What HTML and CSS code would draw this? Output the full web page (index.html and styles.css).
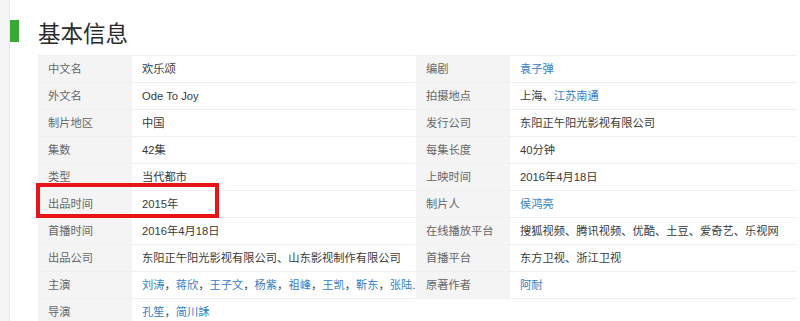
FILE: index.html
```html
<!DOCTYPE html>
<html lang="zh-CN">
<head>
<meta charset="utf-8">
<title>基本信息</title>
<link rel="stylesheet" href="styles.css">
</head>
<body>
<div class="page">
  <div class="strip"></div>
  <main class="content">
    <header class="head">
      <span class="bar"></span>
      <h2 class="title">基本信息</h2>
    </header>
    <div class="info">
      <dl class="block left">
        <div class="row"><dt>中文名</dt><dd>欢乐颂</dd></div>
        <div class="row"><dt>外文名</dt><dd>Ode To Joy</dd></div>
        <div class="row"><dt>制片地区</dt><dd>中国</dd></div>
        <div class="row"><dt>集数</dt><dd>42集</dd></div>
        <div class="row"><dt>类型</dt><dd>当代都市</dd></div>
        <div class="row marked"><dt>出品时间</dt><dd>2015年</dd><span class="mark"></span></div>
        <div class="row"><dt>首播时间</dt><dd>2016年4月18日</dd></div>
        <div class="row"><dt>出品公司</dt><dd>东阳正午阳光影视有限公司、山东影视制作有限公司</dd></div>
        <div class="row"><dt>主演</dt><dd><a>刘涛</a>，<a>蒋欣</a>，<a>王子文</a>，<a>杨紫</a>，<a>祖峰</a>，<a>王凯</a>，<a>靳东</a>，<a>张陆</a>.</dd></div>
        <div class="row"><dt>导演</dt><dd><a>孔笙</a>，<a>简川訸</a></dd></div>
      </dl>
      <dl class="block right">
        <div class="row"><dt>编剧</dt><dd><a>袁子弹</a></dd></div>
        <div class="row"><dt>拍摄地点</dt><dd>上海、<a>江苏南通</a></dd></div>
        <div class="row"><dt>发行公司</dt><dd>东阳正午阳光影视有限公司</dd></div>
        <div class="row"><dt>每集长度</dt><dd>40分钟</dd></div>
        <div class="row"><dt>上映时间</dt><dd>2016年4月18日</dd></div>
        <div class="row"><dt>制片人</dt><dd><a>侯鸿亮</a></dd></div>
        <div class="row"><dt>在线播放平台</dt><dd>搜狐视频、腾讯视频、优酷、土豆、爱奇艺、乐视网</dd></div>
        <div class="row"><dt>首播平台</dt><dd>东方卫视、浙江卫视</dd></div>
        <div class="row"><dt>原著作者</dt><dd><a>阿耐</a></dd></div>
      </dl>
    </div>
  </main>
</div>
</body>
</html>
```

FILE: styles.css
```css
html, body {
  margin: 0;
  padding: 0;
  background: #fff;
}

body {
  font-family: "Liberation Sans", "Noto Sans CJK SC", sans-serif;
  color: #3a3a3a;
  overflow: hidden;
  height: 321px;
}

.page {
  display: flex;
  height: 321px;
}

.strip {
  width: 9px;
  flex: none;
  background: #f5f5f5;
  border-right: 1px solid #e9e9e9;
}

.content {
  flex: 1;
  min-width: 0;
}

.head {
  display: flex;
  align-items: center;
  height: 22px;
  margin-top: 20px;
  margin-bottom: 13px;
}

.bar {
  width: 9px;
  height: 22px;
  background: #38a935;
  flex: none;
}

.title {
  margin: 0 0 0 19px;
  font-weight: normal;
  font-size: 22.5px;
  line-height: 22px;
  color: #2a2a2a;
  font-family: "Noto Sans CJK SC", sans-serif;
  position: relative;
  top: 1px;
}

.info {
  display: flex;
  gap: 1px;
  margin-left: 28px;
}

.block {
  margin: 0;
  border-top: 1px solid #efefef;
  font-size: 11.25px;
}

.left {
  width: 377px;
}

.right {
  width: 381px;
}

.row {
  display: flex;
  height: 26px;
  border-bottom: 1px solid #efefef;
  position: relative;
}

.row dt {
  width: 84px;
  flex: none;
  padding-left: 10px;
  background: #f4f4f4;
  color: #666;
  line-height: 26px;
}

.row dd {
  margin: 0;
  padding-left: 10px;
  line-height: 26px;
  white-space: nowrap;
  overflow: hidden;
  flex: 1;
  min-width: 0;
}

.row a {
  color: #3580c8;
}

.mark {
  position: absolute;
  left: -2px;
  top: -8px;
  width: 175px;
  height: 27px;
  border: 4px solid #e8141a;
}
```
